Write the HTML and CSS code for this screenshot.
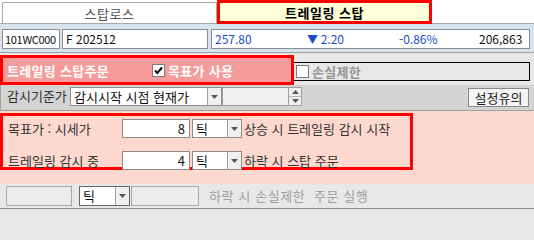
FILE: index.html
```html
<!DOCTYPE html>
<html lang="ko">
<head>
<meta charset="utf-8">
<title>트레일링 스탑</title>
<link rel="stylesheet" href="styles.css">
</head>
<body>
<div class="app">
  <div class="tabs">
    <div class="tab">스탑로스</div>
    <div class="tab active">트레일링 스탑</div>
  </div>

  <div class="quote">
    <div class="box code">101WC000</div>
    <div class="box name">F 202512</div>
    <div class="box price">
      <span class="p-last">257.80</span>
      <span class="p-chg"><span class="tri">▼</span> 2.20</span>
      <span class="p-rate">-0.86%</span>
      <span class="p-vol">206,863</span>
    </div>
  </div>

  <div class="spacer"></div>

  <div class="orderbar">
    <div class="hl">
      <span class="title">트레일링 스탑주문</span>
      <span class="cb checked"><svg viewBox="0 0 11 11" width="11" height="11"><path d="M2 5.5 L4.3 8 L9 2.5" fill="none" stroke="#000" stroke-width="2"/></svg></span>
      <span class="chk-label">목표가 사용</span>
    </div>
    <div class="loss">
      <span class="cb"></span>
      <span class="loss-label">손실제한</span>
    </div>
  </div>

  <div class="watch">
    <span class="lbl">감시기준가</span>
    <div class="combo wide">
      <span class="combo-text">감시시작 시점 현재가</span>
      <span class="arrow"><svg viewBox="0 0 7 4" width="7" height="4"><path d="M0 0 H7 L3.5 4 Z" fill="#555"/></svg></span>
    </div>
    <div class="spin">
      <span class="spin-field"></span>
      <span class="spin-btns">
        <span class="sb"><svg viewBox="0 0 7 4" width="7" height="4"><path d="M0 4 H7 L3.5 0 Z" fill="#555"/></svg></span>
        <span class="sb"><svg viewBox="0 0 7 4" width="7" height="4"><path d="M0 0 H7 L3.5 4 Z" fill="#555"/></svg></span>
      </span>
    </div>
    <div class="btn">설정유의</div>
  </div>

  <div class="target">
    <div class="tbox">
      <div class="trow">
        <span class="tlbl">목표가 : 시세가</span>
        <span class="num">8</span>
        <div class="combo tick">
          <span class="combo-text">틱</span>
          <span class="arrow"><svg viewBox="0 0 7 4" width="7" height="4"><path d="M0 0 H7 L3.5 4 Z" fill="#555"/></svg></span>
        </div>
        <span class="tdesc">상승 시 트레일링 감시 시작</span>
      </div>
      <div class="trow">
        <span class="tlbl">트레일링 감시 중</span>
        <span class="num">4</span>
        <div class="combo tick">
          <span class="combo-text">틱</span>
          <span class="arrow"><svg viewBox="0 0 7 4" width="7" height="4"><path d="M0 0 H7 L3.5 4 Z" fill="#555"/></svg></span>
        </div>
        <span class="tdesc">하락 시 스탑 주문</span>
      </div>
    </div>
  </div>

  <div class="lossrow">
    <span class="dis first"></span>
    <div class="combo tick2">
      <span class="combo-text">틱</span>
      <span class="arrow"><svg viewBox="0 0 7 4" width="7" height="4"><path d="M0 0 H7 L3.5 4 Z" fill="#555"/></svg></span>
    </div>
    <span class="dis second"></span>
    <span class="dis-text">하락 시 손실제한&nbsp; 주문 실행</span>
  </div>
</div>
</body>
</html>
```

FILE: styles.css
```css
* { box-sizing: border-box; }
html, body { margin: 0; padding: 0; }
body {
  width: 534px;
  height: 210px;
  background: #e8e8e8;
  font-family: "Noto Sans CJK KR", "Noto Sans", sans-serif;
  font-size: 12px;
  color: #333;
  overflow: hidden;
}
.app { width: 534px; }

/* tabs */
.tabs {
  display: flex;
  height: 23px;
  padding-left: 2px;
  background: #fff;
  align-items: flex-start;
}
.tab {
  width: 215px;
  height: 21px;
  margin-top: 2px;
  border: 1px solid #a8a8a8;
  border-bottom: none;
  background: #fff;
  color: #555;
  font-size: 13px;
  letter-spacing: 0.5px;
  display: flex;
  align-items: center;
  justify-content: center;
}
.tab.active {
  position: relative;
  z-index: 2;
  margin-top: 0;
  height: 24px;
  border: 3px solid #f00;
  background: #ffffd9;
  color: #000;
  font-weight: bold;
  font-size: 13px;
  letter-spacing: 0.5px;
}

/* quote row */
.quote {
  display: flex;
  height: 30px;
  padding: 5px 0 0 2px;
  background: #d7e3ef;
  border-top: 1px solid #a8a8a8;
  border-bottom: 1px solid #a0a0a0;
}
.box {
  height: 20px;
  background: #fff;
  border: 1px solid #8c8c8c;
  display: flex;
  align-items: center;
  padding-left: 3px;
  color: #111;
  line-height: 1;
  font-size: 12px;
}
.code { width: 58px; font-size: 11px; letter-spacing: -0.3px; padding-left: 2px; }
.name { width: 146px; margin-left: 2px; }
.price {
  width: 319px;
  margin-left: 3px;
  color: #1a4fc4;
}
.p-last { width: 92px; flex: none; }
.p-chg { width: 92px; flex: none; }
.tri { font-size: 11px; }
.p-rate { width: 80px; flex: none; }
.p-vol { flex: 1; text-align: right; padding-right: 10px; color: #111; }

.spacer { height: 2px; }

/* order bar */
.orderbar {
  display: flex;
  height: 30px;
}
.hl {
  width: 294px;
  height: 30px;
  border: 3px solid #f00;
  background: #f59b9b;
  display: flex;
  align-items: center;
  padding-left: 4px;
  color: #fff;
  font-weight: bold;
  font-size: 13px;
}
.title { width: 145px; letter-spacing: 0.3px; }
.cb {
  width: 13px;
  height: 13px;
  background: #fff;
  border: 1px solid #7a7a7a;
  display: flex;
  align-items: center;
  justify-content: center;
}
.chk-label { margin-left: 3px; letter-spacing: 0.3px; }
.loss {
  margin-top: 7px;
  width: 236px;
  height: 19px;
  border: 1px solid #000;
  border-left: none;
  display: flex;
  align-items: center;
  padding-left: 2px;
}
.loss-label {
  margin-left: 3px;
  color: #959595;
  font-weight: bold;
  font-size: 13px;
  letter-spacing: 0.3px;
}

/* watch row */
.watch {
  display: flex;
  align-items: flex-start;
  height: 26px;
  padding-top: 2px;
  background: #d4d4d4;
  border-left: 1px solid #a0a0a0;
  border-bottom: 1px solid #a0a0a0;
}
.lbl { width: 69px; padding-left: 6px; line-height: 18px; color: #333; font-size: 13px; }
.combo {
  display: flex;
  height: 19px;
  background: #fff;
  border: 1px solid #8c8c8c;
}
.combo-text { flex: 1; padding-left: 3px; line-height: 17px; color: #111; }
.arrow {
  width: 14px;
  border-left: 1px solid #a0a0a0;
  background: #f0f0f0;
  display: flex;
  align-items: center;
  justify-content: center;
}
.combo.wide { width: 152px; font-size: 13px; }
.spin {
  display: flex;
  width: 80px;
  height: 19px;
}
.spin-field {
  flex: 1;
  background: #f0f0f0;
  border: 1px solid #a0a0a0;
}
.spin-btns {
  width: 13px;
  display: flex;
  flex-direction: column;
  border: 1px solid #a0a0a0;
  border-left: none;
  background: #f0f0f0;
}
.sb {
  flex: 1;
  display: flex;
  align-items: center;
  justify-content: center;
}
.sb + .sb { border-top: 1px solid #b8b8b8; }
.btn {
  margin-left: auto;
  margin-right: 5px;
  margin-top: 1px;
  width: 61px;
  height: 19px;
  border: 1px solid #8a8a8a;
  background: #f4f4f4;
  color: #222;
  font-size: 13px;
  display: flex;
  align-items: center;
  justify-content: center;
}

/* target section */
.target {
  height: 73px;
  padding-top: 2px;
  background: #fdd8cf;
}
.tbox {
  width: 413px;
  height: 57px;
  border: 3px solid #f00;
  padding: 3px 0 0 5px;
  display: flex;
  flex-direction: column;
  gap: 13px;
}
.trow {
  display: flex;
  height: 19px;
  align-items: center;
}
.tlbl { width: 114px; font-size: 13px; color: #333; }
.num {
  width: 68px;
  height: 19px;
  background: #fff;
  border: 1px solid #8c8c8c;
  text-align: right;
  padding-right: 4px;
  line-height: 17px;
  color: #111;
  font-size: 13px;
}
.combo.tick { width: 50px; margin-left: 2px; font-size: 13px; }
.tdesc { margin-left: 2px; font-size: 13px; color: #333; }

/* loss row */
.lossrow {
  display: flex;
  align-items: flex-start;
  height: 25px;
  padding-top: 2px;
  background: #e8e8e8;
  border-bottom: 1px solid #8c8c8c;
}
.dis {
  height: 20px;
  background: #ececec;
  border: 1px solid #a8a8a8;
}
.dis.first { width: 66px; margin-left: 6px; }
.combo.tick2 { width: 51px; height: 20px; margin-left: 7px; font-size: 13px; border-color: #666; }
.dis.second { width: 68px; margin-left: 1px; }
.dis-text { margin-left: 10px; line-height: 20px; color: #a0a0a0; font-size: 13px; letter-spacing: 0.6px; }
```
